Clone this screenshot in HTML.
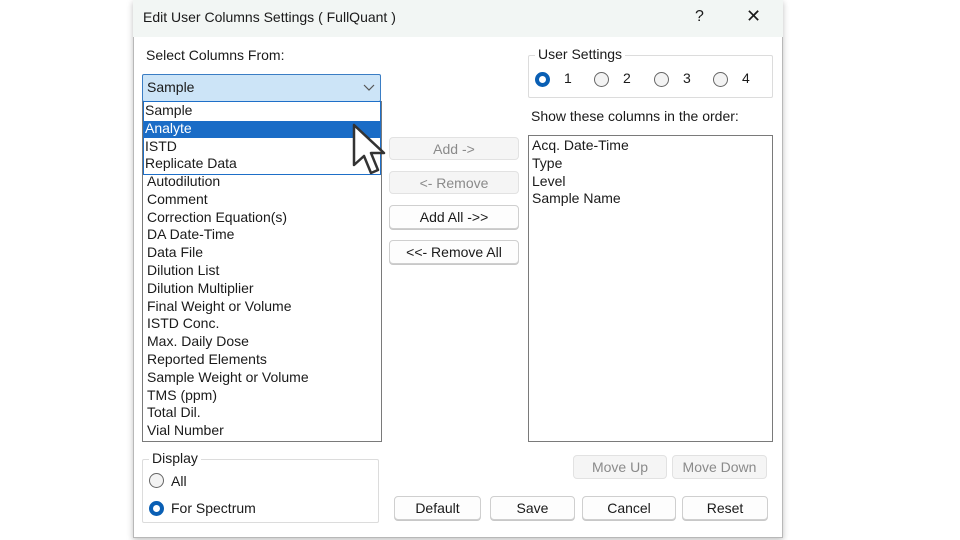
<!DOCTYPE html>
<html><head><meta charset="utf-8"><style>
*{box-sizing:border-box;margin:0;padding:0}
body{width:960px;height:540px;background:#fff;position:relative;overflow:hidden;font-family:"Segoe UI","Liberation Sans",sans-serif;font-size:13.5px;color:#1a1a1a}
.a{position:absolute}
.dlg{left:133px;top:0;width:650px;height:538px;border:1px solid #b8b8b8;background:#fff;box-shadow:0 2px 6px rgba(0,0,0,.25)}
.title{left:133px;top:0;width:650px;height:37px;background:#f2f6f4}
.btn{position:absolute;border:1px solid #cfcfcf;border-radius:4px;background:#fdfdfd;text-align:center;line-height:22px;font-size:14px;color:#1a1a1a;box-shadow:0 1px 0 #c8c8c8}
.dis{background:#f5f5f5;color:#8a8a8a;box-shadow:none;border-color:#e2e2e2}
.list{border:1px solid #7a7a7a;background:#fff}
.row{position:absolute;left:4px;font-size:14px;line-height:18px;white-space:nowrap}
.grp{border:1px solid #dcdcdc;border-radius:2px}
.rad{position:absolute;width:15px;height:15px;border-radius:50%;border:1px solid #666;background:#f3f3f3}
.rad.on{border:4px solid #0a5fb4;background:#fff}
</style></head><body>
<div class="a dlg"></div>
<div class="a title"></div>
<div class="a" style="left:143px;top:9px;font-size:14px">Edit User Columns Settings ( FullQuant )</div>
<div class="a" style="left:695px;top:8px;font-size:16px">?</div>
<div class="a" style="left:746px;top:6px;font-size:18px">✕</div>

<div class="a" style="left:146px;top:47px;font-size:14px">Select Columns From:</div>
<div class="a list" style="left:142px;top:101px;width:240px;height:341px"></div>
<div class="a" style="left:142px;top:74px;width:239px;height:28px;background:#cce4f7;border:1px solid #3a7dc4;border-radius:2px"></div>
<div class="a" style="left:147px;top:79px;font-size:14px">Sample</div>
<svg class="a" style="left:363px;top:84px" width="12" height="8"><path d="M1 1 L6 6 L11 1" fill="none" stroke="#555" stroke-width="1.2"/></svg>
<div class="a" style="left:143px;top:101px;width:238px;height:74px;border:1px solid #1e6fc8;background:#fff"></div>
<div class="a" style="left:144px;top:121px;width:236px;height:17px;background:#1a6cc6"></div>
<div class="a" style="left:143px;top:102px;width:238px;height:72px;font-size:14px;line-height:17.8px">
<div style="padding-left:2px">Sample</div><div style="padding-left:2px;color:#fff">Analyte</div><div style="padding-left:2px">ISTD</div><div style="padding-left:2px">Replicate Data</div></div>
<div class="a" style="left:147px;top:173px;font-size:14px;line-height:17.8px">Autodilution<br>Comment<br>Correction Equation(s)<br>DA Date-Time<br>Data File<br>Dilution List<br>Dilution Multiplier<br>Final Weight or Volume<br>ISTD Conc.<br>Max. Daily Dose<br>Reported Elements<br>Sample Weight or Volume<br>TMS (ppm)<br>Total Dil.<br>Vial Number</div>

<div class="btn dis" style="left:389px;top:137px;width:130px;height:23px">Add -&gt;</div>
<div class="btn dis" style="left:389px;top:171px;width:130px;height:23px">&lt;- Remove</div>
<div class="btn" style="left:389px;top:205px;width:130px;height:24px">Add All -&gt;&gt;</div>
<div class="btn" style="left:389px;top:240px;width:130px;height:24px">&lt;&lt;- Remove All</div>

<div class="a grp" style="left:528px;top:55px;width:245px;height:43px"></div>
<div class="a" style="left:535px;top:46px;background:#fff;padding:0 3px;font-size:14px">User Settings</div>
<div class="rad on" style="left:535px;top:72px"></div><div class="a" style="left:564px;top:70px;font-size:14px">1</div>
<div class="rad" style="left:594px;top:72px"></div><div class="a" style="left:623px;top:70px;font-size:14px">2</div>
<div class="rad" style="left:654px;top:72px"></div><div class="a" style="left:683px;top:70px;font-size:14px">3</div>
<div class="rad" style="left:713px;top:72px"></div><div class="a" style="left:742px;top:70px;font-size:14px">4</div>

<div class="a" style="left:531px;top:108px;font-size:14px">Show these columns in the order:</div>
<div class="a list" style="left:528px;top:135px;width:245px;height:307px"></div>
<div class="a" style="left:532px;top:137px;font-size:14px;line-height:17.8px">Acq. Date-Time<br>Type<br>Level<br>Sample Name</div>

<div class="a grp" style="left:142px;top:459px;width:237px;height:64px"></div>
<div class="a" style="left:149px;top:450px;background:#fff;padding:0 3px;font-size:14px">Display</div>
<div class="rad" style="left:149px;top:473px"></div><div class="a" style="left:171px;top:473px;font-size:14px">All</div>
<div class="rad on" style="left:149px;top:501px"></div><div class="a" style="left:171px;top:500px;font-size:14px">For Spectrum</div>

<div class="btn dis" style="left:573px;top:455px;width:94px;height:24px">Move Up</div>
<div class="btn dis" style="left:672px;top:455px;width:95px;height:24px">Move Down</div>
<div class="btn" style="left:394px;top:496px;width:87px;height:24px">Default</div>
<div class="btn" style="left:490px;top:496px;width:85px;height:24px">Save</div>
<div class="btn" style="left:582px;top:496px;width:94px;height:24px">Cancel</div>
<div class="btn" style="left:682px;top:496px;width:86px;height:24px">Reset</div>

<svg class="a" style="left:350px;top:122px" width="40" height="58"><path d="M4 3 L4 43 L14 34 L21 51 L28 48 L21 31 L34 31 Z" fill="#fff" stroke="#333" stroke-width="2.5" stroke-linejoin="round"/></svg>
</body></html>
